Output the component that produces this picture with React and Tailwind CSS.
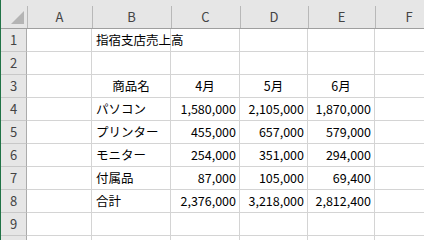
const cols = [
  { key: "A", w: "w-[65px]" },
  { key: "B", w: "w-[79px]" },
  { key: "C", w: "w-[69px]" },
  { key: "D", w: "w-[68px]" },
  { key: "E", w: "w-[67px]" },
  { key: "F", w: "w-[68px]" },
];

// cell: [text, align]  l = left, c = center, r = right
const rows = [
  [null, ["指宿支店売上高", "l"]],
  [],
  [null, ["商品名", "c"], ["4月", "c"], ["5月", "c"], ["6月", "c"]],
  [null, ["パソコン", "l"], ["1,580,000", "r"], ["2,105,000", "r"], ["1,870,000", "r"]],
  [null, ["プリンター", "l"], ["455,000", "r"], ["657,000", "r"], ["579,000", "r"]],
  [null, ["モニター", "l"], ["254,000", "r"], ["351,000", "r"], ["294,000", "r"]],
  [null, ["付属品", "l"], ["87,000", "r"], ["105,000", "r"], ["69,400", "r"]],
  [null, ["合計", "l"], ["2,376,000", "r"], ["3,218,000", "r"], ["2,812,400", "r"]],
  [],
];

const alignClass = {
  l: "justify-start pl-[4px]",
  c: "justify-center",
  r: "justify-end pr-[3px]",
};

const HeaderRow = () => (
  <div className="flex shrink-0 h-[29px] bg-[#e6e6e6] border-b border-[#9f9f9f]">
    <div className="w-[26px] shrink-0 relative">
      <svg className="absolute left-[10px] top-[11px]" width="13" height="13" viewBox="0 0 13 13">
        <polygon points="13,0 13,13 0,13" fill="#b4b4b4" />
      </svg>
    </div>
    {cols.map((c) => (
      <div
        key={c.key}
        className={`${c.w} shrink-0 relative flex justify-center pt-[7px] text-[13px] text-[#444]`}
      >
        <span className="absolute left-0 top-[6px] bottom-0 w-px bg-[#b8b8b8]" />
        {c.key}
      </div>
    ))}
  </div>
);

const Row = ({ n, cells }) => (
  <div className="flex shrink-0 h-[23px]">
    <div className="w-[26px] shrink-0 bg-[#e6e6e6] border-r border-b border-r-[#ababab] border-b-[#c8c8c8] flex items-center justify-center text-[13px] text-[#444]">
      {n}
    </div>
    {cols.map((c, i) => {
      const cell = cells[i];
      return (
        <div
          key={c.key}
          className={`${c.w} shrink-0 border-r border-b border-[#d4d4d4] flex items-center whitespace-nowrap text-[12.5px] text-black ${
            cell ? alignClass[cell[1]] : ""
          }`}
        >
          {cell ? cell[0] : ""}
        </div>
      );
    })}
  </div>
);

export default function App() {
  return (
    <div
      className="w-[424px] h-[240px] overflow-hidden bg-white flex items-start border-l border-[#217346]"
      style={{ fontFamily: '"Noto Sans CJK JP", "Noto Sans", sans-serif' }}
    >
      <div className="flex flex-col shrink-0">
        <HeaderRow />
        {rows.map((cells, i) => (
          <Row key={i} n={i + 1} cells={cells} />
        ))}
        {/* row 10, only its top edge shows */}
        <Row n="" cells={[]} />
      </div>
    </div>
  );
}
